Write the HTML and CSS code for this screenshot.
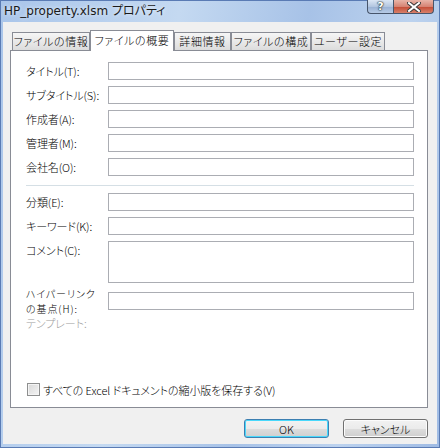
FILE: index.html
```html
<!DOCTYPE html>
<html>
  <head>
    <meta charset="utf-8" />
    <title>HP_property.xlsm プロパティ</title>
    <link rel="stylesheet" href="styles.css">
  </head>

  <body>
    <div class="window">
      <!-- title bar -->
      <div class="titlebar">
        <span class="title">HP_property.xlsm プロパティ</span>
        <div class="caption-buttons">
          <div class="cap-btn help">?</div>
          <div class="cap-btn close">
            <svg width="14" height="10" viewBox="0 0 14 10">
              <path d="M2 1 L12 9 M12 1 L2 9" stroke="#3b3b3b" stroke-width="4" stroke-linecap="square" />
              <path d="M2 1 L12 9 M12 1 L2 9" stroke="#ffffff" stroke-width="2" stroke-linecap="square" />
            </svg>
          </div>
        </div>
      </div>

      <div class="client">
        <!-- tabs -->
        <div class="tabs">
          <div class="tab t1">ファイルの情報</div>
          <div class="tab t2 active">ファイルの概要</div>
          <div class="tab t3">詳細情報</div>
          <div class="tab t4">ファイルの構成</div>
          <div class="tab t5">ユーザー設定</div>
        </div>

        <div class="panel">
          <div class="fields">
            <label class="lbl">タイトル(T):</label>
            <div class="box"></div>
            <label class="lbl">サブタイトル(S):</label>
            <div class="box"></div>
            <label class="lbl">作成者(A):</label>
            <div class="box"></div>
            <label class="lbl">管理者(M):</label>
            <div class="box"></div>
            <label class="lbl">会社名(O):</label>
            <div class="box"></div>
          </div>

          <div class="separator"></div>

          <div class="fields">
            <label class="lbl">分類(E):</label>
            <div class="box"></div>
            <label class="lbl">キーワード(K):</label>
            <div class="box"></div>
            <label class="lbl top">コメント(C):</label>
            <div class="box tall"></div>
            <label class="lbl two-line">ハイパーリンク<br />の基点(H):</label>
            <div class="box spaced"></div>
            <label class="lbl disabled">テンプレート:</label>
            <div class="empty"></div>
          </div>

          <div class="check-row">
            <span class="checkbox"></span>
            <span>すべての Excel ドキュメントの縮小版を保存する(V)</span>
          </div>
        </div>

        <div class="button-row">
          <button class="btn default">OK</button>
          <button class="btn">キャンセル</button>
        </div>
      </div>
    </div>
  </body>
</html>
```

FILE: styles.css
```css
body {
  margin: 0;
  padding: 0;
  font-family: "Noto Sans CJK JP", sans-serif;
  font-feature-settings: "palt";
  font-size: 11px;
  font-weight: 300;
  letter-spacing: -0.1px;
  color: #000;
}

.window {
  width: 440px;
  height: 448px;
  box-sizing: border-box;
  padding: 0 3px 4px 3px;
  display: flex;
  flex-direction: column;
  background: linear-gradient(100deg, #a9c5ea 0%, #c4d9f1 35%, #a7c2e7 60%, #bcd2ee 80%, #9fbbe4 100%);
  box-shadow: inset 0 0 0 1px #5a7bb4;
}

/* title bar */
.titlebar {
  height: 22px;
  display: flex;
  justify-content: space-between;
  align-items: flex-start;
}

.title {
  font-family: "DejaVu Sans", "Noto Sans CJK JP", sans-serif;
  font-size: 12px;
  font-weight: normal;
  letter-spacing: 0;
  line-height: 22px;
  padding-left: 1px;
  color: #1a1a1a;
  text-shadow: 0 0 4px rgba(255, 255, 255, 0.9);
}

.caption-buttons {
  display: flex;
  margin-right: 3px;
}

.cap-btn {
  height: 14px;
  box-sizing: border-box;
  border: 1px solid #47556b;
  border-top: none;
  display: flex;
  align-items: center;
  justify-content: center;
}

.help {
  width: 26px;
  border-right: none;
  border-radius: 0 0 0 4px;
  background: linear-gradient(#dbe6f4, #b3c6e0 50%, #98b0d3 51%, #b7cbe6);
  color: #fff;
  font-family: "DejaVu Sans", sans-serif;
  font-weight: bold;
  font-size: 11px;
  text-shadow: 0 0 1px #233, 0 0 1px #233, 0 0 2px #233;
}

.close {
  width: 41px;
  border-radius: 0 0 4px 0;
  background: linear-gradient(#e8b4a8, #d68474 50%, #c34a34 51%, #d8806a);
}

/* client area */
.client {
  flex: 1;
  background: #f0f0f0;
  padding: 8px 9px 0 7px;
}

.tabs {
  display: flex;
  align-items: flex-end;
  height: 20px;
  padding-left: 2px;
}

.tab {
  height: 18px;
  box-sizing: border-box;
  border: 1px solid #898c95;
  border-bottom: none;
  background: linear-gradient(#f6f6f6, #e9e9e9 50%, #dcdcdc);
  text-align: center;
  letter-spacing: 0.6px;
  line-height: 17px;
  white-space: nowrap;
}

.t1 { width: 78px; }
.t2 { width: 84px; }
.t3 { width: 57px; }
.t4 { width: 80px; }
.t5 { width: 74px; }

.tab.active {
  height: 21px;
  margin-bottom: -1px;
  background: #fff;
  line-height: 18px;
  position: relative;
  z-index: 1;
}

.panel {
  height: 358px;
  box-sizing: border-box;
  border: 1px solid #898c95;
  background: #fff;
  padding: 11px 13px 11px 15px;
  display: flex;
  flex-direction: column;
}

.fields {
  display: grid;
  grid-template-columns: 82px 306px;
  row-gap: 6px;
}

.lbl {
  line-height: 18px;
  white-space: nowrap;
  align-self: center;
}

.lbl.top {
  align-self: start;
}

.lbl.two-line {
  align-self: start;
  font-size: 10px;
  line-height: 15px;
  letter-spacing: 0.9px;
  margin: -3px 0 -6px;
}

.lbl.disabled {
  color: #a0a0a0;
  line-height: 14px;
}

.box {
  height: 18px;
  box-sizing: border-box;
  border: 1px solid #abadb3;
  background: #fff;
}

.box.tall {
  height: 42px;
}

.box.spaced {
  margin-top: 3px;
}

.empty {
  height: 14px;
}

.separator {
  height: 1px;
  width: 388px;
  background: #d5dfe5;
  margin: 9px 0 7px;
}

.check-row {
  margin-top: auto;
  display: flex;
  align-items: center;
  gap: 3px;
  height: 13px;
  margin-left: 1px;
}

.checkbox {
  width: 13px;
  height: 13px;
  box-sizing: border-box;
  border: 1px solid #8e8f8f;
  background: linear-gradient(135deg, #d8d8d8, #f4f4f4);
  box-shadow: inset 0 0 0 1px #f4f4f4;
}

/* dialog buttons */
.button-row {
  display: flex;
  justify-content: flex-end;
  gap: 14px;
  padding-top: 11px;
}

.btn {
  width: 85px;
  height: 19px;
  box-sizing: border-box;
  border: 1px solid #707070;
  border-radius: 3px;
  background: linear-gradient(#f2f2f2, #ebebeb 50%, #dddddd 51%, #cfcfcf);
  box-shadow: inset 0 0 0 1px #fcfcfc;
  font-family: "Noto Sans CJK JP", sans-serif;
  font-feature-settings: "palt";
  font-size: 11px;
  font-weight: 300;
  line-height: 16px;
  padding: 0;
  color: #000;
}

.btn.default {
  border-color: #3c7fb1;
  box-shadow: inset 0 0 0 1px #48d8fb;
}
```
